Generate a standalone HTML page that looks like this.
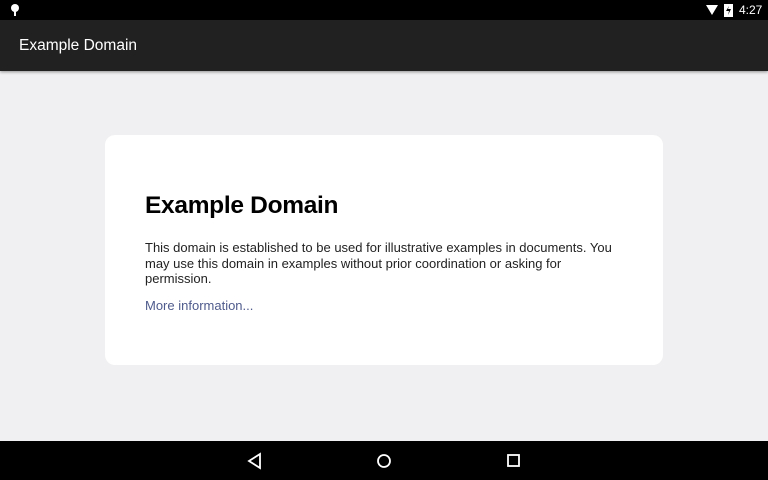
<!DOCTYPE html>
<html><head><style>
body{margin:0;width:768px;height:480px;overflow:hidden;background:#f0f0f2;font-family:"Liberation Sans",sans-serif;position:relative}
.sb{position:absolute;top:0;left:0;width:768px;height:20px;background:#000;color:#fff;font-size:12px}
.ab{position:absolute;top:20px;left:0;width:768px;height:51px;background:#212121;box-shadow:0 1px 3px rgba(0,0,0,.4)}
.ab span{position:absolute;left:19px;top:17px;color:#fff;font-size:15.5px}
.card{position:absolute;left:105px;top:135px;width:558px;height:230px;background:#fff;border-radius:10px}
h1{position:absolute;left:40px;top:57px;margin:0;font-size:24.5px;font-weight:bold;color:#000;letter-spacing:-0.3px}
p{position:absolute;left:40px;margin:0;font-size:13px;line-height:15.5px;color:#222;width:475px}
.nav{position:absolute;top:441px;left:0;width:768px;height:39px;background:#000}
</style></head><body>
<div class="sb">
<svg style="position:absolute;left:10px;top:3px" width="10" height="14"><circle cx="5" cy="5" r="4" fill="#fff"/><rect x="4" y="8" width="2" height="5" fill="#fff"/></svg>
<svg style="position:absolute;left:706px;top:5px" width="12" height="10"><path d="M0 0 L12 0 L6 10Z" fill="#fff"/></svg>
<svg style="position:absolute;left:724px;top:3px" width="9" height="14"><rect x="0" y="1" width="9" height="13" fill="#fff"/><path d="M5 3 L2 8 L5 8 L4 12 L7 6 L4 6Z" fill="#000"/></svg>
<span style="position:absolute;left:739px;top:3px">4:27</span>
</div>
<div class="ab"><span>Example Domain</span></div>
<div class="card">
<h1>Example Domain</h1>
<p style="top:105px">This domain is established to be used for illustrative examples in documents. You may use this domain in examples without prior coordination or asking for permission.</p>
<p style="top:163px;color:#4f5b8c">More information...</p>
</div>
<div class="nav">
<svg style="position:absolute;left:246px;top:11px" width="18" height="18"><path d="M14 2 L3 9 L14 16Z" fill="none" stroke="#fff" stroke-width="1.8"/></svg>
<svg style="position:absolute;left:375px;top:12px" width="18" height="18"><circle cx="9" cy="8" r="6" fill="none" stroke="#fff" stroke-width="1.8"/></svg>
<svg style="position:absolute;left:505px;top:12px" width="18" height="18"><rect x="3" y="2" width="11" height="11" fill="none" stroke="#fff" stroke-width="1.8"/></svg>
</div>
</body></html>
